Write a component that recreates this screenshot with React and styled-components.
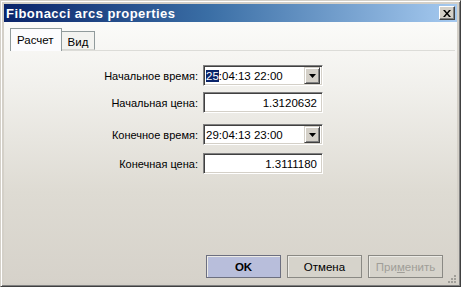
import React from 'react';
import styled, { createGlobalStyle } from 'styled-components';

const Global = createGlobalStyle`
    html, body {
        margin: 0;
        padding: 0;
        overflow: hidden;
        background: #d4d0c8;
    }
`;

const Window = styled.div`
    width: 461px;
    height: 287px;
    box-sizing: border-box;
    display: flex;
    flex-direction: column;
    padding: 3px;
    background: #d4d0c8;
    border: 1px solid;
    border-color: #d4d0c8 #404040 #404040 #d4d0c8;
    box-shadow: inset 1px 1px #ffffff, inset -1px -1px #808080;
    font-family: "Liberation Sans", Arial, sans-serif;
    font-size: 11px;
    color: #000;
`;

const TitleBar = styled.div`
    height: 18px;
    display: flex;
    align-items: center;
    justify-content: space-between;
    padding: 0 2px 0 2px;
    background: linear-gradient(to right, #0a246a 0%, #3a6ea5 45%, #a6caf0 100%);
`;

const Title = styled.span`
    color: #fff;
    font-weight: bold;
    font-size: 13px;
    letter-spacing: 0.45px;
`;

const CloseButton = styled.div`
    width: 16px;
    height: 14px;
    box-sizing: border-box;
    display: flex;
    align-items: center;
    justify-content: center;
    background: #d4d0c8;
    border: 1px solid;
    border-color: #ffffff #404040 #404040 #ffffff;
    box-shadow: inset -1px -1px #808080;
`;

const Body = styled.div`
    flex: 1;
    display: flex;
    flex-direction: column;
    padding: 6px 2px 0 6px;
    background: linear-gradient(to bottom, #fbfbf9 0%, #f1f0ec 25%, #dedbd3 65%, #d6d2ca 100%);
`;

const TabStrip = styled.div`
    display: flex;
    align-items: flex-end;
    height: 22px;
    position: relative;
    z-index: 1;
`;

const Tab = styled.div`
    box-sizing: border-box;
    height: ${p => (p.$active ? '23px' : '19px')};
    margin-bottom: ${p => (p.$active ? '-1px' : '0')};
    padding: ${p => (p.$active ? '5px 7px 0 6px' : '4px 6px 0 6px')};
    background: ${p => (p.$active ? '#fcfcfe' : '#f3f3f0')};
    border: 1px solid #919b9c;
    border-bottom: ${p => (p.$active ? 'none' : '1px solid #d8d8d4')};
    border-left: ${p => (p.$active ? '1px solid #919b9c' : 'none')};
    font-size: 11.5px;
`;

const Panel = styled.div`
    flex: 1;
    display: flex;
    flex-direction: column;
    border-top: 1px solid #dcdcd8;
    padding-top: 14px;
`;

const Row = styled.div`
    display: flex;
    align-items: center;
    height: 21px;
    margin-top: ${p => p.$gap}px;
`;

const Label = styled.div`
    width: 188px;
    text-align: right;
    padding-right: 5px;
    font-size: 11px;
`;

const Sunken = styled.div`
    width: 120px;
    height: 21px;
    box-sizing: border-box;
    display: flex;
    align-items: center;
    background: #fff;
    border: 1px solid;
    border-color: #808080 #ffffff #ffffff #808080;
    box-shadow: inset 1px 1px #404040, inset -1px -1px #d4d0c8;
    font-size: 11.5px;
`;

const FieldText = styled.div`
    flex: 1;
    padding: 0 ${p => (p.$right ? '5px' : '0')} 0 2px;
    text-align: ${p => (p.$right ? 'right' : 'left')};
    white-space: nowrap;
`;

const Selected = styled.span`
    background: #0a246a;
    color: #fff;
`;

const DropButton = styled.div`
    width: 16px;
    height: 17px;
    margin-right: 2px;
    box-sizing: border-box;
    display: flex;
    align-items: center;
    justify-content: center;
    background: #d4d0c8;
    border: 1px solid;
    border-color: #d4d0c8 #404040 #404040 #d4d0c8;
    box-shadow: inset 1px 1px #ffffff, inset -1px -1px #808080;
`;

const Footer = styled.div`
    display: flex;
    justify-content: flex-end;
    align-items: flex-end;
    gap: 6px;
    padding: 0 12px 5px 0;
    position: relative;
`;

const Button = styled.div`
    width: 75px;
    height: 23px;
    box-sizing: border-box;
    display: flex;
    align-items: center;
    justify-content: center;
    font-size: 11.5px;
    font-weight: ${p => (p.$default ? 'bold' : 'normal')};
    color: ${p => (p.$disabled ? '#a09e98' : '#000')};
    background: ${p => (p.$default ? '#b8bedb' : '#d6d3cb')};
    border: 1px solid ${p => (p.$default ? '#6c6f80' : '#8a8984')};
    box-shadow: inset 1px 1px #ecebe6;
`;

const Underline = styled.span`
    text-decoration: underline;
`;

const Grip = styled.svg`
    position: absolute;
    right: -1px;
    bottom: 0;
`;

const Arrow = () => (
    <svg width="7" height="4" viewBox="0 0 7 4">
        <path d="M0 0h7L3.5 4z" fill="#000" />
    </svg>
);

const fields = [
    { label: 'Начальное время:', combo: true, value: '04:13 22:00', sel: '25', gap: 0 },
    { label: 'Начальная цена:', value: '1.3120632', gap: 6 },
    { label: 'Конечное время:', combo: true, value: '29:04:13 23:00', gap: 11 },
    { label: 'Конечная цена:', value: '1.3111180', gap: 8 },
];

const App = () => (
    <>
        <Global />
        <Window>
            <TitleBar>
                <Title>Fibonacci arcs properties</Title>
                <CloseButton>
                    <svg width="8" height="7" viewBox="0 0 8 7">
                        <path d="M0 0h2l2 2.5L6 0h2L5 3.5 8 7H6L4 4.5 2 7H0l3-3.5z" fill="#000" />
                    </svg>
                </CloseButton>
            </TitleBar>
            <Body>
                <TabStrip>
                    <Tab $active>Расчет</Tab>
                    <Tab>Вид</Tab>
                </TabStrip>
                <Panel>
                    {fields.map(f => (
                        <Row key={f.label} $gap={f.gap}>
                            <Label>{f.label}</Label>
                            <Sunken>
                                {f.combo ? (
                                    <>
                                        <FieldText>
                                            {f.sel && <Selected>{f.sel}</Selected>}
                                            {f.sel ? ':' + f.value : f.value}
                                        </FieldText>
                                        <DropButton><Arrow /></DropButton>
                                    </>
                                ) : (
                                    <FieldText $right>{f.value}</FieldText>
                                )}
                            </Sunken>
                        </Row>
                    ))}
                </Panel>
                <Footer>
                    <Button $default>OK</Button>
                    <Button>Отмена</Button>
                    <Button $disabled>При<Underline>м</Underline>енить</Button>
                    <Grip width="10" height="10" viewBox="0 0 10 10">
                        {[[8, 2], [5, 5], [8, 5], [2, 8], [5, 8], [8, 8]].map(([x, y]) => (
                            <rect key={x + '-' + y} x={x} y={y} width="2" height="2" fill="#a09e98" />
                        ))}
                    </Grip>
                </Footer>
            </Body>
        </Window>
    </>
);

export default App;
